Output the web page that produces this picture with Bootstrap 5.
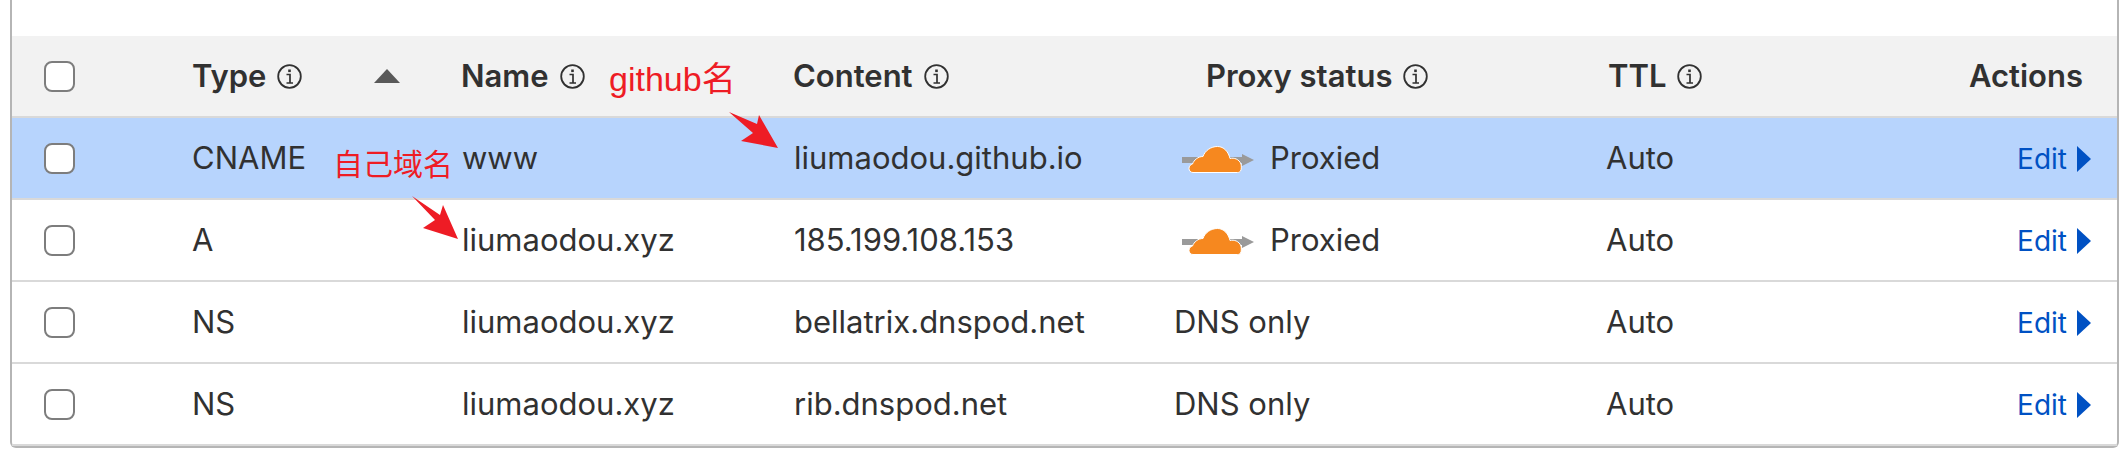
<!DOCTYPE html>
<html lang="en">
<head>
    <meta charset="UTF-8">
    <meta name="viewport" content="width=device-width, initial-scale=1.0">
    <title>DNS records</title>
    <link rel="stylesheet" href="https://cdn.jsdelivr.net/npm/bootstrap@5.3.0/dist/css/bootstrap.min.css">
    <style>
        body {
            background: #fff;
            font-family: "Inter", "Liberation Sans", sans-serif;
            color: #313131;
            overflow: hidden;
        }
        .sheet {
            position: relative;
            width: 2109px;
            height: 448px;
            margin-left: 10px;
            padding-top: 36px;
            border: 2px solid #b5b5b5;
            border-top: 0;
            border-radius: 0 0 6px 6px;
        }
        .dns-table {
            table-layout: fixed;
            width: 2105px;
            font-size: 31px;
            --bs-table-color: #313131;
            --bs-table-border-color: #d9d9d9;
        }
        .dns-table th, .dns-table td {
            height: 82px;
            padding: 0;
            border-bottom-width: 2px;
            vertical-align: middle;
        }
        .dns-table th { height: 81px; font-weight: 600; }
        .dns-table tbody tr:last-child td { border-bottom-color: #d9d9d9; }
        .dns-table thead { --bs-table-bg: #f2f2f2; }
        .row-picked { --bs-table-bg: #b7d4fd; }

        .col-check { width: 180px; }
        .col-type { width: 269px; }
        .col-name { width: 332px; }
        .col-content { width: 381px; }
        .col-proxy { width: 432px; }
        .col-ttl { width: 300px; }

        .dns-check.form-check-input {
            display: block;
            width: 31px;
            height: 31px;
            margin: 0 0 0 32px;
            border: 2px solid #7d7d7d;
            border-radius: 8px;
        }
        .info-ic { width: 25px; height: 25px; margin-left: 11px; flex: none; }
        .sort-up {
            width: 0;
            height: 0;
            margin-left: 72px;
            border-left: 13px solid transparent;
            border-right: 13px solid transparent;
            border-bottom: 14px solid #595959;
        }
        .head-proxy { padding-left: 32px; }
        .head-ttl { padding-left: 2px; }
        .cell-shift { padding-left: 1px !important; }
        .cell-proxy { padding-left: 8px; gap: 16px; }
        .cloud-ic { width: 72px; height: 30px; flex: none; }
        .head-actions { padding-right: 34px !important; }
        .cell-actions { padding-right: 26px !important; }
        .edit-link {
            color: #0051c3;
            font-size: 28px;
            padding-top: 2px;
            text-decoration: none;
            gap: 10px;
        }
        .edit-arrow { width: 14px; height: 26px; }

        .note {
            position: absolute;
            color: #ee1c25;
            font-family: "Liberation Sans", "Noto Sans CJK SC", sans-serif;
            line-height: 1;
            white-space: nowrap;
        }
        .note-github { left: 597px; top: 62px; font-size: 34px; }
        .note-domain { left: 321px; top: 150px; font-size: 30px; }
        .note-arrows { position: absolute; left: -12px; top: 0; width: 2119px; height: 448px; pointer-events: none; }
    </style>
</head>
<body>
    <svg width="0" height="0" class="position-absolute">
        <symbol id="info" viewBox="0 0 25 25">
            <circle cx="12.5" cy="12.5" r="11.3" fill="none" stroke="#313131" stroke-width="1.8"/>
            <rect x="11.2" y="5.5" width="2.6" height="2.6" fill="#313131"/>
            <path d="M9.500 10.500h3.500v8M9.500 19h6.500" fill="none" stroke="#313131" stroke-width="1.7"/>
        </symbol>
        <symbol id="cloud" viewBox="0 0 72 30">
            <rect x="0" y="14" width="62" height="6" fill="#9a9a9a"/>
            <path d="M60 11l12 6-12 6z" fill="#9a9a9a"/>
            <path d="M11 29.500C8.500 29.500 7 27.500 7 25.500 7 23 8.500 21.500 10.500 21 12 17 16 13.500 21 13.500 23 7.500 29 3.500 35.500 3.500 42 3.500 46.500 9 48 15.500 52 14.500 57 16 59 21 59.500 23 59.500 27 58.500 28 57.500 29 57 29.500 55.500 29.500z" fill="#f6881f" stroke="#fff" stroke-width="1"/>
        </symbol>
        <symbol id="go" viewBox="0 0 14 26">
            <path d="M0 0l14 13L0 26z" fill="#0051c3"/>
        </symbol>
    </svg>

    <div class="sheet">
        <table class="table dns-table mb-0">
            <colgroup>
                <col class="col-check">
                <col class="col-type">
                <col class="col-name">
                <col class="col-content">
                <col class="col-proxy">
                <col class="col-ttl">
                <col>
            </colgroup>
            <thead>
                <tr>
                    <th><input class="form-check-input dns-check" type="checkbox" aria-label="Select all"></th>
                    <th><div class="d-flex align-items-center">Type<svg class="info-ic"><use href="#info"/></svg><span class="sort-up"></span></div></th>
                    <th><div class="d-flex align-items-center">Name<svg class="info-ic"><use href="#info"/></svg></div></th>
                    <th><div class="d-flex align-items-center">Content<svg class="info-ic"><use href="#info"/></svg></div></th>
                    <th><div class="d-flex align-items-center head-proxy">Proxy status<svg class="info-ic"><use href="#info"/></svg></div></th>
                    <th><div class="d-flex align-items-center head-ttl">TTL<svg class="info-ic"><use href="#info"/></svg></div></th>
                    <th class="text-end head-actions">Actions</th>
                </tr>
            </thead>
            <tbody>
                <tr class="row-picked">
                    <td><input class="form-check-input dns-check" type="checkbox" aria-label="Select row"></td>
                    <td>CNAME</td>
                    <td class="cell-shift">www</td>
                    <td class="cell-shift">liumaodou.github.io</td>
                    <td><div class="d-flex align-items-center cell-proxy"><svg class="cloud-ic"><use href="#cloud"/></svg>Proxied</div></td>
                    <td>Auto</td>
                    <td class="cell-actions"><a href="#" class="edit-link d-flex align-items-center justify-content-end">Edit<svg class="edit-arrow"><use href="#go"/></svg></a></td>
                </tr>
                <tr>
                    <td><input class="form-check-input dns-check" type="checkbox" aria-label="Select row"></td>
                    <td>A</td>
                    <td class="cell-shift">liumaodou.xyz</td>
                    <td class="cell-shift">185.199.108.153</td>
                    <td><div class="d-flex align-items-center cell-proxy"><svg class="cloud-ic"><use href="#cloud"/></svg>Proxied</div></td>
                    <td>Auto</td>
                    <td class="cell-actions"><a href="#" class="edit-link d-flex align-items-center justify-content-end">Edit<svg class="edit-arrow"><use href="#go"/></svg></a></td>
                </tr>
                <tr>
                    <td><input class="form-check-input dns-check" type="checkbox" aria-label="Select row"></td>
                    <td>NS</td>
                    <td class="cell-shift">liumaodou.xyz</td>
                    <td class="cell-shift">bellatrix.dnspod.net</td>
                    <td>DNS only</td>
                    <td>Auto</td>
                    <td class="cell-actions"><a href="#" class="edit-link d-flex align-items-center justify-content-end">Edit<svg class="edit-arrow"><use href="#go"/></svg></a></td>
                </tr>
                <tr>
                    <td><input class="form-check-input dns-check" type="checkbox" aria-label="Select row"></td>
                    <td>NS</td>
                    <td class="cell-shift">liumaodou.xyz</td>
                    <td class="cell-shift">rib.dnspod.net</td>
                    <td>DNS only</td>
                    <td>Auto</td>
                    <td class="cell-actions"><a href="#" class="edit-link d-flex align-items-center justify-content-end">Edit<svg class="edit-arrow"><use href="#go"/></svg></a></td>
                </tr>
            </tbody>
        </table>

        <!-- red annotations drawn over the table -->
        <span class="note note-github">github名</span>
        <span class="note note-domain">自己域名</span>
        <svg class="note-arrows" viewBox="0 0 2119 448">
            <path d="M729 112L757 124 759 115 778 148 741 141 753 133z" fill="#ee1c25"/>
            <path d="M412 196L440 215 443 205 458 239 423 228 435 220z" fill="#ee1c25"/>
        </svg>
    </div>

    <script src="https://cdn.jsdelivr.net/npm/bootstrap@5.3.0/dist/js/bootstrap.bundle.min.js"></script>
</body>
</html>
